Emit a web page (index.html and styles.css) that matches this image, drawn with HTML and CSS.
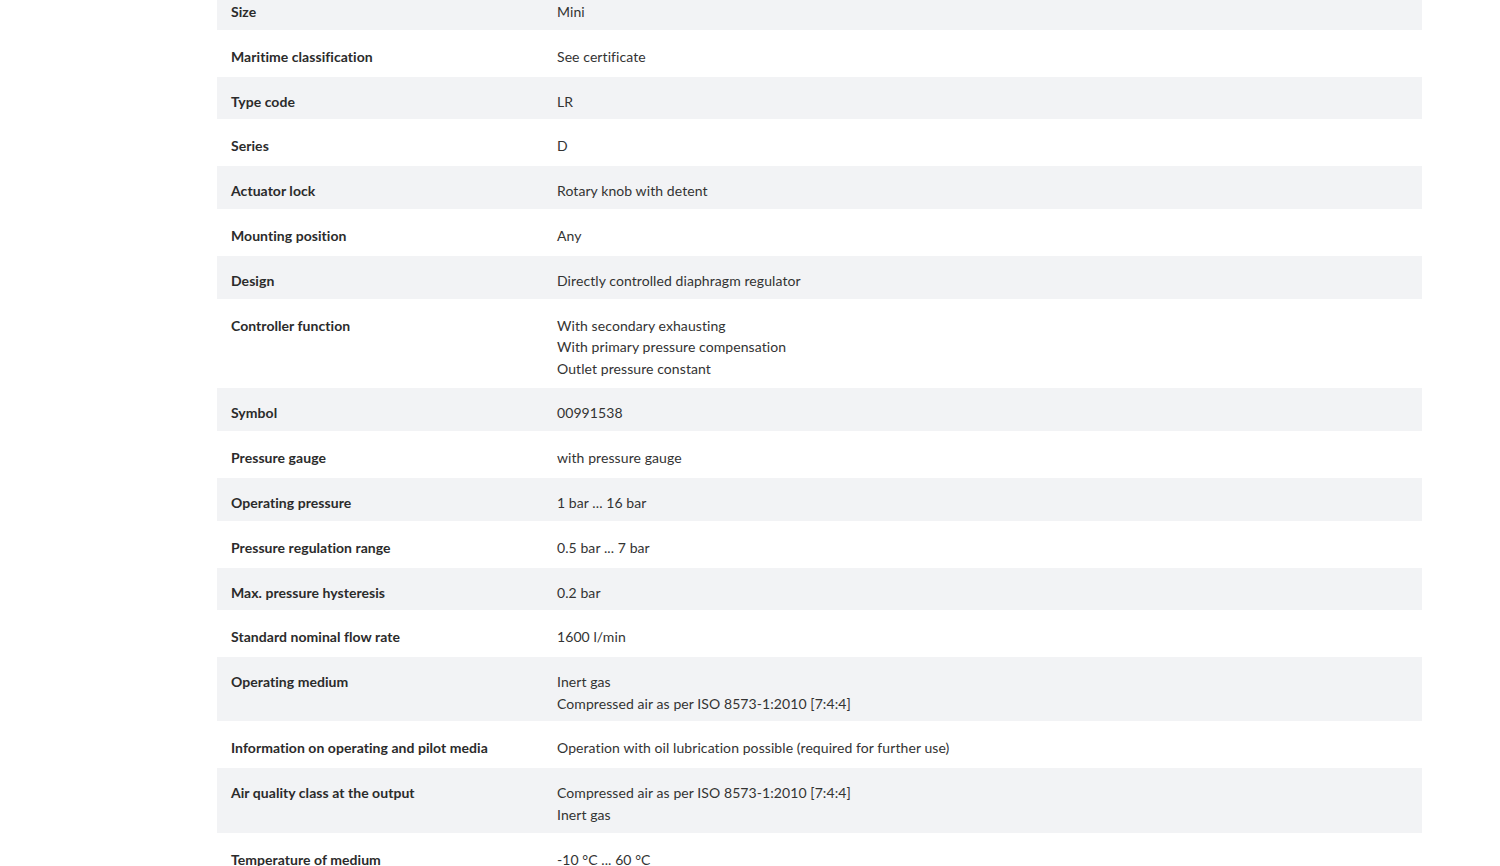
FILE: index.html
```html
<!DOCTYPE html>
<html lang="en">
<head>
<meta charset="utf-8">
<title>Technical data</title>
<link rel="stylesheet" href="styles.css">
</head>
<body>
<main class="page">
  <table class="specs">
    <tbody>
      <tr><th>Size</th><td>Mini</td></tr>
      <tr><th>Maritime classification</th><td>See certificate</td></tr>
      <tr><th>Type code</th><td>LR</td></tr>
      <tr><th>Series</th><td>D</td></tr>
      <tr><th>Actuator lock</th><td>Rotary knob with detent</td></tr>
      <tr><th>Mounting position</th><td>Any</td></tr>
      <tr><th>Design</th><td>Directly controlled diaphragm regulator</td></tr>
      <tr><th>Controller function</th><td>With secondary exhausting<br>With primary pressure compensation<br>Outlet pressure constant</td></tr>
      <tr><th>Symbol</th><td>00991538</td></tr>
      <tr><th>Pressure gauge</th><td>with pressure gauge</td></tr>
      <tr><th>Operating pressure</th><td>1 bar ... 16 bar</td></tr>
      <tr><th>Pressure regulation range</th><td>0.5 bar ... 7 bar</td></tr>
      <tr><th>Max. pressure hysteresis</th><td>0.2 bar</td></tr>
      <tr><th>Standard nominal flow rate</th><td>1600 l/min</td></tr>
      <tr><th>Operating medium</th><td>Inert gas<br>Compressed air as per ISO 8573-1:2010 [7:4:4]</td></tr>
      <tr><th>Information on operating and pilot media</th><td>Operation with oil lubrication possible (required for further use)</td></tr>
      <tr><th>Air quality class at the output</th><td>Compressed air as per ISO 8573-1:2010 [7:4:4]<br>Inert gas</td></tr>
      <tr><th>Temperature of medium</th><td>-10 °C ... 60 °C</td></tr>
    </tbody>
  </table>
</main>
</body>
</html>
```
FILE: styles.css
```css
html, body {
  margin: 0;
  padding: 0;
  background: #ffffff;
}
body {
  font-family: Lato, "Open Sans", Arial, sans-serif;
  color: #333333;
  overflow: hidden;
}
.page {
  padding-left: 217px;
  margin-top: -15px;
}
.specs {
  width: 1205px;
  border-collapse: separate;
  border-spacing: 0 2px;
  font-size: 14px;
  line-height: 21.5px;
}
.specs tr:nth-child(odd) th,
.specs tr:nth-child(odd) td {
  background: #f2f3f5;
}
.specs th,
.specs td {
  padding: 14px 14px 7.3px;
  text-align: left;
  vertical-align: top;
}
.specs th {
  width: 298px;
  font-weight: 700;
  color: #2b2b2b;
  letter-spacing: 0.05px;
}
.specs td {
  font-weight: 400;
  color: #333333;
  letter-spacing: 0.08px;
}
```
